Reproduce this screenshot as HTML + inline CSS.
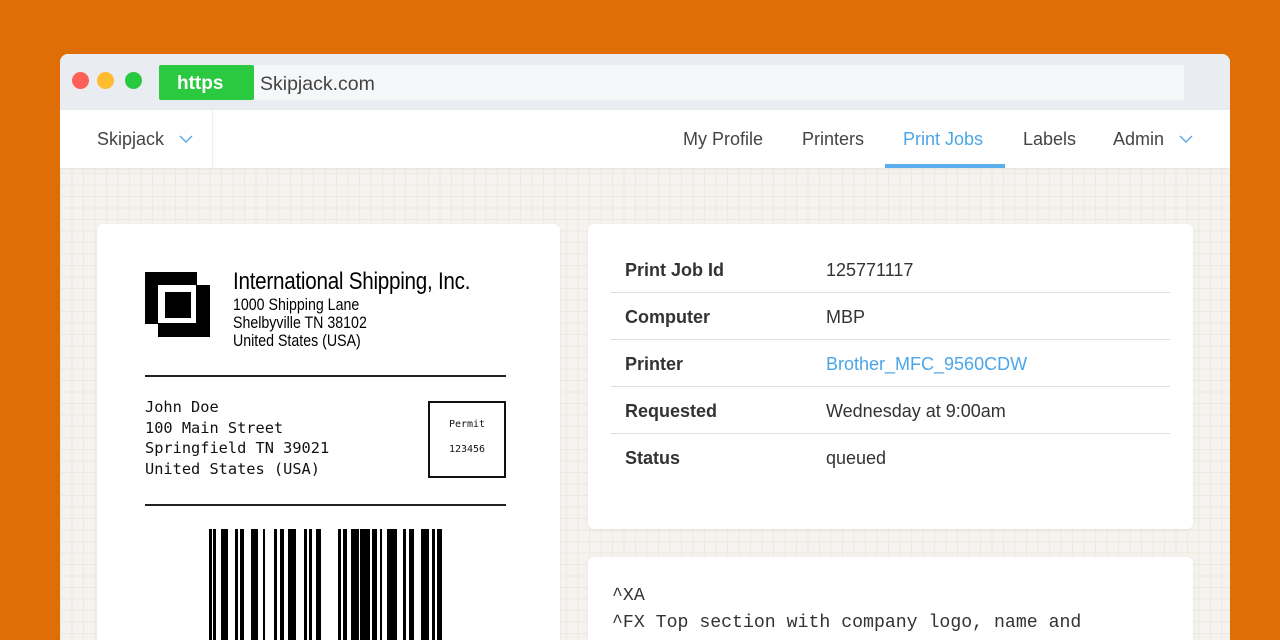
<!DOCTYPE html>
<html><head><style>
*{margin:0;padding:0;box-sizing:border-box}
html,body{width:1280px;height:640px;overflow:hidden}
body{background:#e06e06;font-family:"Liberation Sans",sans-serif;position:relative}
.win{position:absolute;left:60px;top:54px;width:1170px;height:586px;border-radius:8px 8px 0 0;overflow:hidden;background:#f4f3ef;
background-image:linear-gradient(#ede9dc 1px,transparent 1px),linear-gradient(90deg,#ede9dc 1px,transparent 1px);background-size:11.5px 11.5px;background-position:0 4px}
.tb{position:absolute;left:0;top:0;width:100%;height:56px;background:#e9ecf1}
.dot{position:absolute;top:18px;width:17px;height:17px;border-radius:50%}
.url{position:absolute;left:99px;top:11px;width:1025px;height:35px;background:#f6f7f9;border-radius:2px}
.https{position:absolute;left:99px;top:11px;width:95px;height:35px;background:#2ac940;border-radius:2px;color:#fff;font-size:19px;font-weight:bold;line-height:37px;padding-left:18px}
.host{position:absolute;left:200px;top:12px;line-height:37px;font-size:19.5px;color:#444}
.nav{position:absolute;left:0;top:56px;width:100%;height:58px;background:#fff;box-shadow:0 1px 3px rgba(0,0,0,.08)}
.nav span{position:absolute;top:0;line-height:58px;font-size:18px;color:#444}
.card{position:absolute;background:#fff;border-radius:6px;box-shadow:0 1px 3px rgba(0,0,0,.06);overflow:hidden}
.row{position:absolute;left:23px;width:559px;height:47px;font-size:18px;color:#333}
.row b{position:absolute;left:14px;top:0;line-height:49px}
.row i{font-style:normal;position:absolute;left:215px;top:0;line-height:49px}
.row.l{border-bottom:1px solid #ddd}
.mono{font-family:"DejaVu Sans Mono","Liberation Mono",monospace;font-size:15.3px;color:#111;position:absolute;left:48px;line-height:20.6px}
</style></head><body>
<div class="win">
 <div class="tb">
  <div class="dot" style="left:12px;background:#fe5f57"></div>
  <div class="dot" style="left:37px;background:#febc2e"></div>
  <div class="dot" style="left:65px;background:#28c840"></div>
  <div class="url"></div><div class="https">https</div><div class="host">Skipjack.com</div>
 </div>
 <div class="nav">
  <span style="left:37px">Skipjack</span>
  <svg style="position:absolute;left:119px;top:24px" width="14" height="10"><path d="M1 2l6 6 6-6" fill="none" stroke="#5aa8e8" stroke-width="1.4"/></svg>
  <div style="position:absolute;left:152px;top:0;width:1px;height:58px;background:#eee"></div>
  <span style="left:623px">My Profile</span>
  <span style="left:742px">Printers</span>
  <span style="left:843px;color:#4aa6ea">Print Jobs</span>
  <div style="position:absolute;left:825px;top:54px;width:120px;height:4px;background:#5aaeeb"></div>
  <span style="left:963px">Labels</span>
  <span style="left:1053px">Admin</span>
  <svg style="position:absolute;left:1119px;top:24px" width="14" height="10"><path d="M1 2l6 6 6-6" fill="none" stroke="#5aa8e8" stroke-width="1.4"/></svg>
 </div>
 <div class="card" style="left:37px;top:170px;width:463px;height:416px;border-radius:6px 6px 0 0">
  <svg style="position:absolute;left:48px;top:48px" width="70" height="70">
   <rect x="0" y="0" width="52" height="52" fill="#000"/>
   <rect x="13" y="13" width="52" height="52" fill="#000"/>
   <rect x="13" y="13" width="38" height="38" fill="#fff"/>
   <rect x="20" y="20" width="26" height="26" fill="#000"/>
  </svg>
  <div style="position:absolute;left:136px;top:44px;font-size:24px;color:#000;transform:scaleX(.86);transform-origin:left;white-space:nowrap;letter-spacing:-.3px">International Shipping, Inc.</div>
  <div style="position:absolute;left:136px;top:72px;font-size:16.5px;line-height:18px;color:#000;transform:scaleX(.86);transform-origin:left;white-space:nowrap">1000 Shipping Lane<br>Shelbyville TN 38102<br>United States (USA)</div>
  <div style="position:absolute;left:48px;top:151px;width:361px;height:2px;background:#222"></div>
  <div class="mono" style="top:173px">John Doe<br>100 Main Street<br>Springfield TN 39021<br>United States (USA)</div>
  <div style="position:absolute;left:331px;top:177px;width:78px;height:77px;border:2px solid #111;font-family:'DejaVu Sans Mono',monospace;font-size:10px;text-align:center;color:#111"><div style="margin-top:16px">Permit</div><div style="margin-top:14px">123456</div></div>
  <div style="position:absolute;left:48px;top:280px;width:361px;height:2px;background:#222"></div>
  <svg style="position:absolute;left:0;top:305px" width="463" height="111" fill="#000">
   <rect x="112" y="0" width="3" height="200"/><rect x="116" y="0" width="3" height="200"/><rect x="124" y="0" width="7" height="200"/><rect x="138" y="0" width="3" height="200"/><rect x="143" y="0" width="4" height="200"/><rect x="154" y="0" width="7" height="200"/><rect x="166" y="0" width="2" height="200"/><rect x="177" y="0" width="3" height="200"/><rect x="183" y="0" width="4" height="200"/><rect x="191" y="0" width="8" height="200"/><rect x="207" y="0" width="3" height="200"/><rect x="212" y="0" width="3" height="200"/><rect x="219" y="0" width="5" height="200"/><rect x="241" y="0" width="3" height="200"/><rect x="246" y="0" width="4" height="200"/><rect x="254" y="0" width="8" height="200"/><rect x="263" y="0" width="10" height="200"/><rect x="275" y="0" width="5" height="200"/><rect x="283" y="0" width="2" height="200"/><rect x="290" y="0" width="10" height="200"/><rect x="306" y="0" width="3" height="200"/><rect x="312" y="0" width="5" height="200"/><rect x="324" y="0" width="8" height="200"/><rect x="335" y="0" width="3" height="200"/><rect x="340" y="0" width="5" height="200"/>
  </svg>
 </div>
 <div class="card" style="left:528px;top:170px;width:605px;height:305px">
  <div class="row l" style="top:22px"><b>Print Job Id</b><i>125771117</i></div>
  <div class="row l" style="top:69px"><b>Computer</b><i>MBP</i></div>
  <div class="row l" style="top:116px"><b>Printer</b><i style="color:#4aa6ea">Brother_MFC_9560CDW</i></div>
  <div class="row l" style="top:163px"><b>Requested</b><i>Wednesday at 9:00am</i></div>
  <div class="row" style="top:210px"><b>Status</b><i>queued</i></div>
 </div>
 <div class="card" style="left:528px;top:503px;width:605px;height:83px;border-radius:6px 6px 0 0">
  <div style="position:absolute;left:24px;top:26px;font-family:'Liberation Mono',monospace;font-size:18.2px;line-height:27px;color:#333;white-space:pre">^XA
^FX Top section with company logo, name and</div>
 </div>
</div>
</body></html>
